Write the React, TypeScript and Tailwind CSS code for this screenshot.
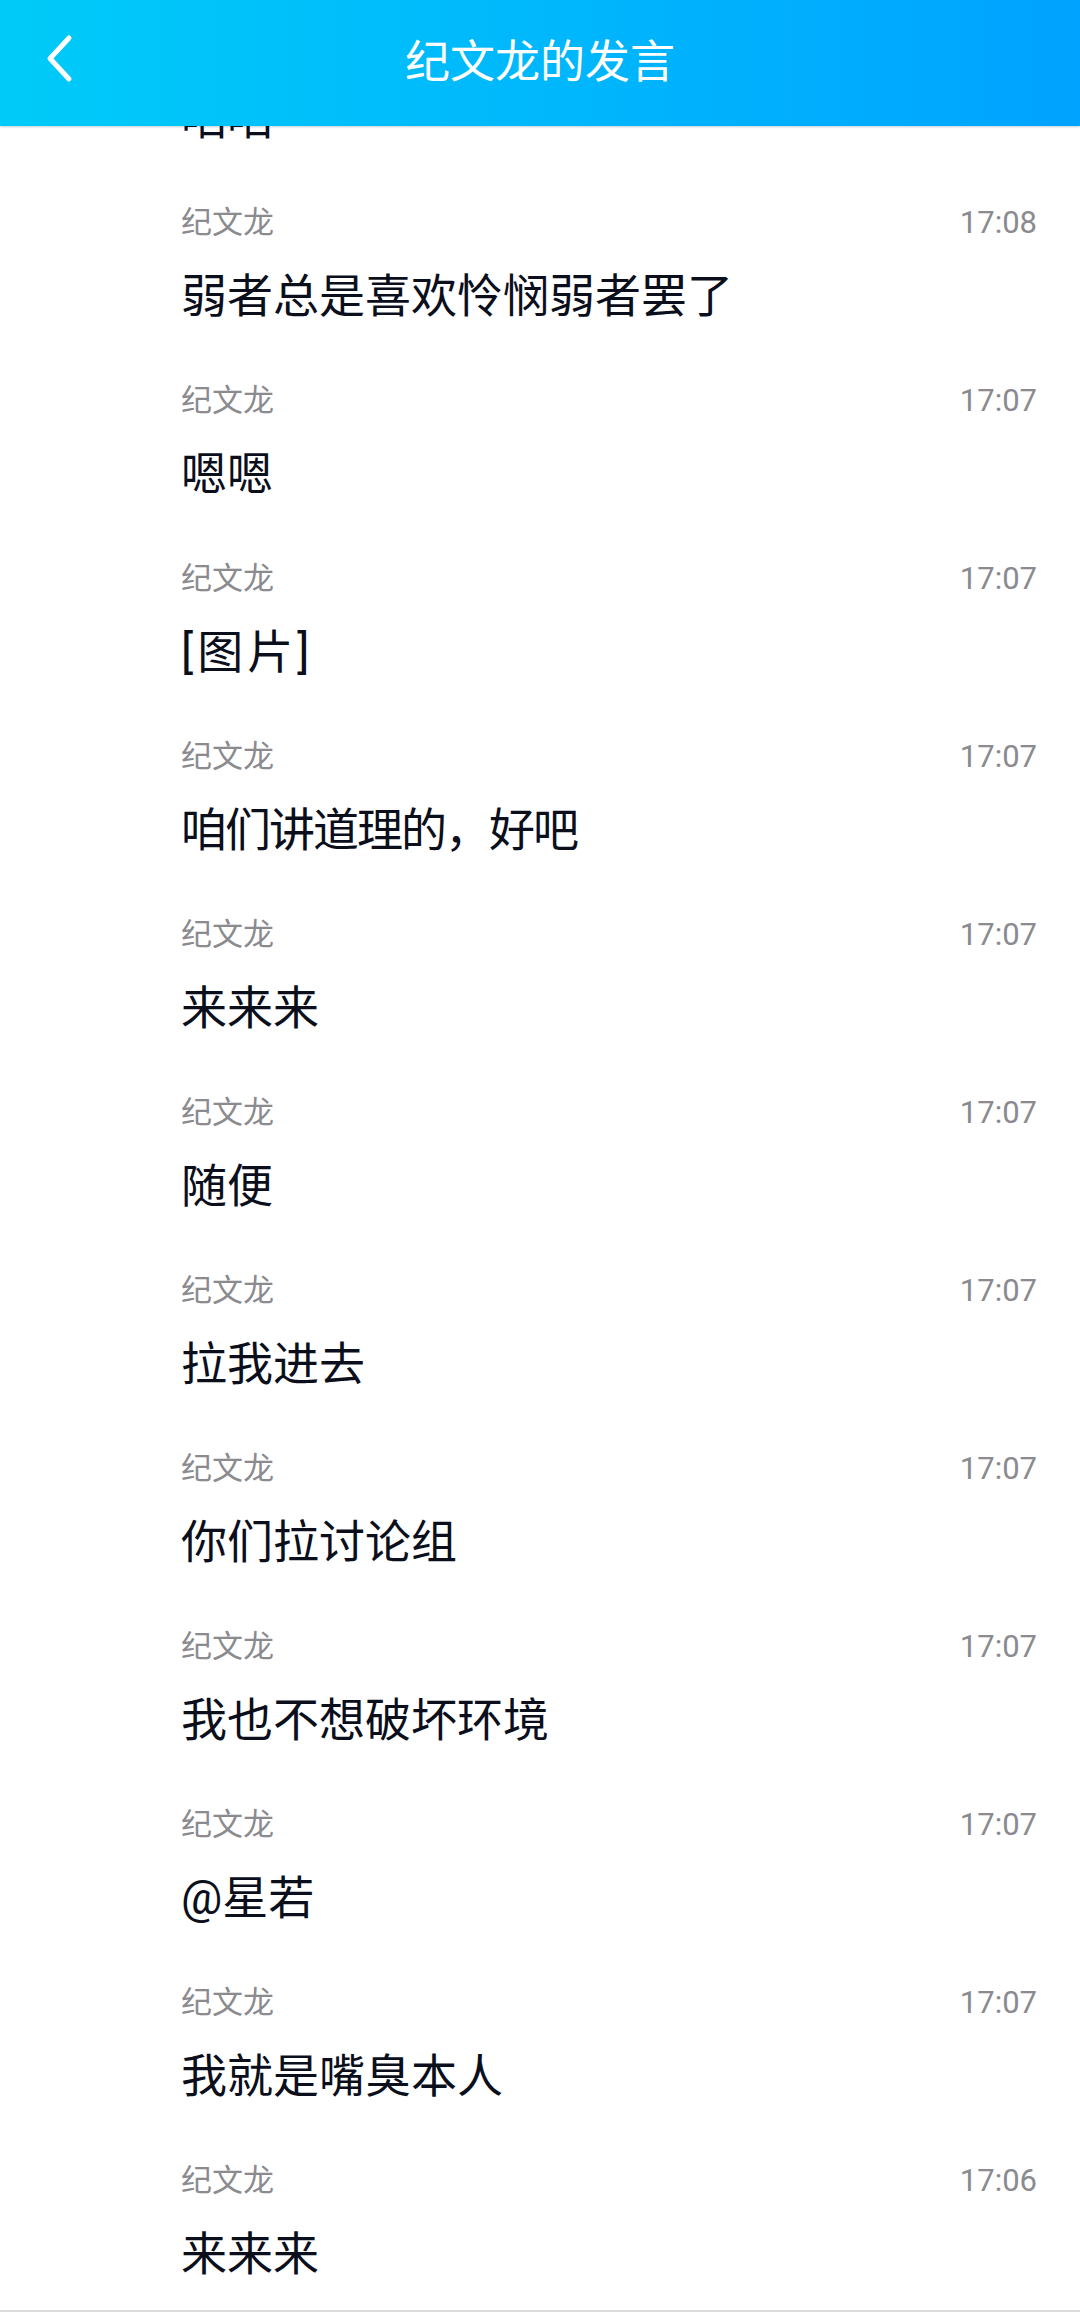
import React from "react";

interface Message {
  name: string;
  time: string;
  text: string;
  tracking?: string;
}

const messages: Message[] = [
  { name: "纪文龙", time: "17:08", text: "咱咱" },
  { name: "纪文龙", time: "17:08", text: "弱者总是喜欢怜悯弱者罢了" },
  { name: "纪文龙", time: "17:07", text: "嗯嗯" },
  { name: "纪文龙", time: "17:07", text: "[图片]", tracking: "tracking-[4px]" },
  { name: "纪文龙", time: "17:07", text: "咱们讲道理的，好吧", tracking: "tracking-[-2px]" },
  { name: "纪文龙", time: "17:07", text: "来来来" },
  { name: "纪文龙", time: "17:07", text: "随便" },
  { name: "纪文龙", time: "17:07", text: "拉我进去" },
  { name: "纪文龙", time: "17:07", text: "你们拉讨论组" },
  { name: "纪文龙", time: "17:07", text: "我也不想破坏环境" },
  { name: "纪文龙", time: "17:07", text: "@星若" },
  { name: "纪文龙", time: "17:07", text: "我就是嘴臭本人" },
  { name: "纪文龙", time: "17:06", text: "来来来" },
];

function MessageRow({ msg }: { msg: Message }) {
  return (
    <div className="h-[178px] pl-[181px] pr-[43px] pt-[30px]">
      <div className="flex h-[44px] items-center justify-between text-[31px] text-[#8a8a8f]">
        <span>{msg.name}</span>
        <span>{msg.time}</span>
      </div>
      <div className={`mt-[21px] flex h-[60px] items-center text-[46px] text-[#0b0f1c] ${msg.tracking ?? ""}`}>
        {msg.text}
      </div>
    </div>
  );
}

export default function App() {
  return (
    <div
      className="flex h-[2312px] w-[1080px] flex-col overflow-hidden bg-white"
      style={{ fontFamily: '"Roboto", "Noto Sans CJK SC", sans-serif' }}
    >
      {/* 顶部标题栏 */}
      <div className="relative z-10 flex h-[126px] shrink-0 items-center justify-center bg-gradient-to-r from-[#00cbf8] to-[#00a3ff] shadow-[0_1px_2px_rgba(0,60,110,0.25)]">
        <svg
          className="absolute left-[40px] top-[30px]"
          width="40"
          height="60"
          viewBox="0 0 40 60"
          fill="none"
        >
          <polyline
            points="29,8 10,28.5 29,49"
            stroke="white"
            strokeWidth="5"
            strokeLinecap="round"
            strokeLinejoin="round"
          />
        </svg>
        <span className="text-[45px] text-white">纪文龙的发言</span>
      </div>

      {/* 发言列表 */}
      <div className="flex-1 overflow-hidden">
        <div className="mt-[-133px]">
          {messages.map((m, i) => (
            <MessageRow key={i} msg={m} />
          ))}
        </div>
      </div>

      <div className="h-[2px] shrink-0 bg-[#dcdcdc]" />
    </div>
  );
}
